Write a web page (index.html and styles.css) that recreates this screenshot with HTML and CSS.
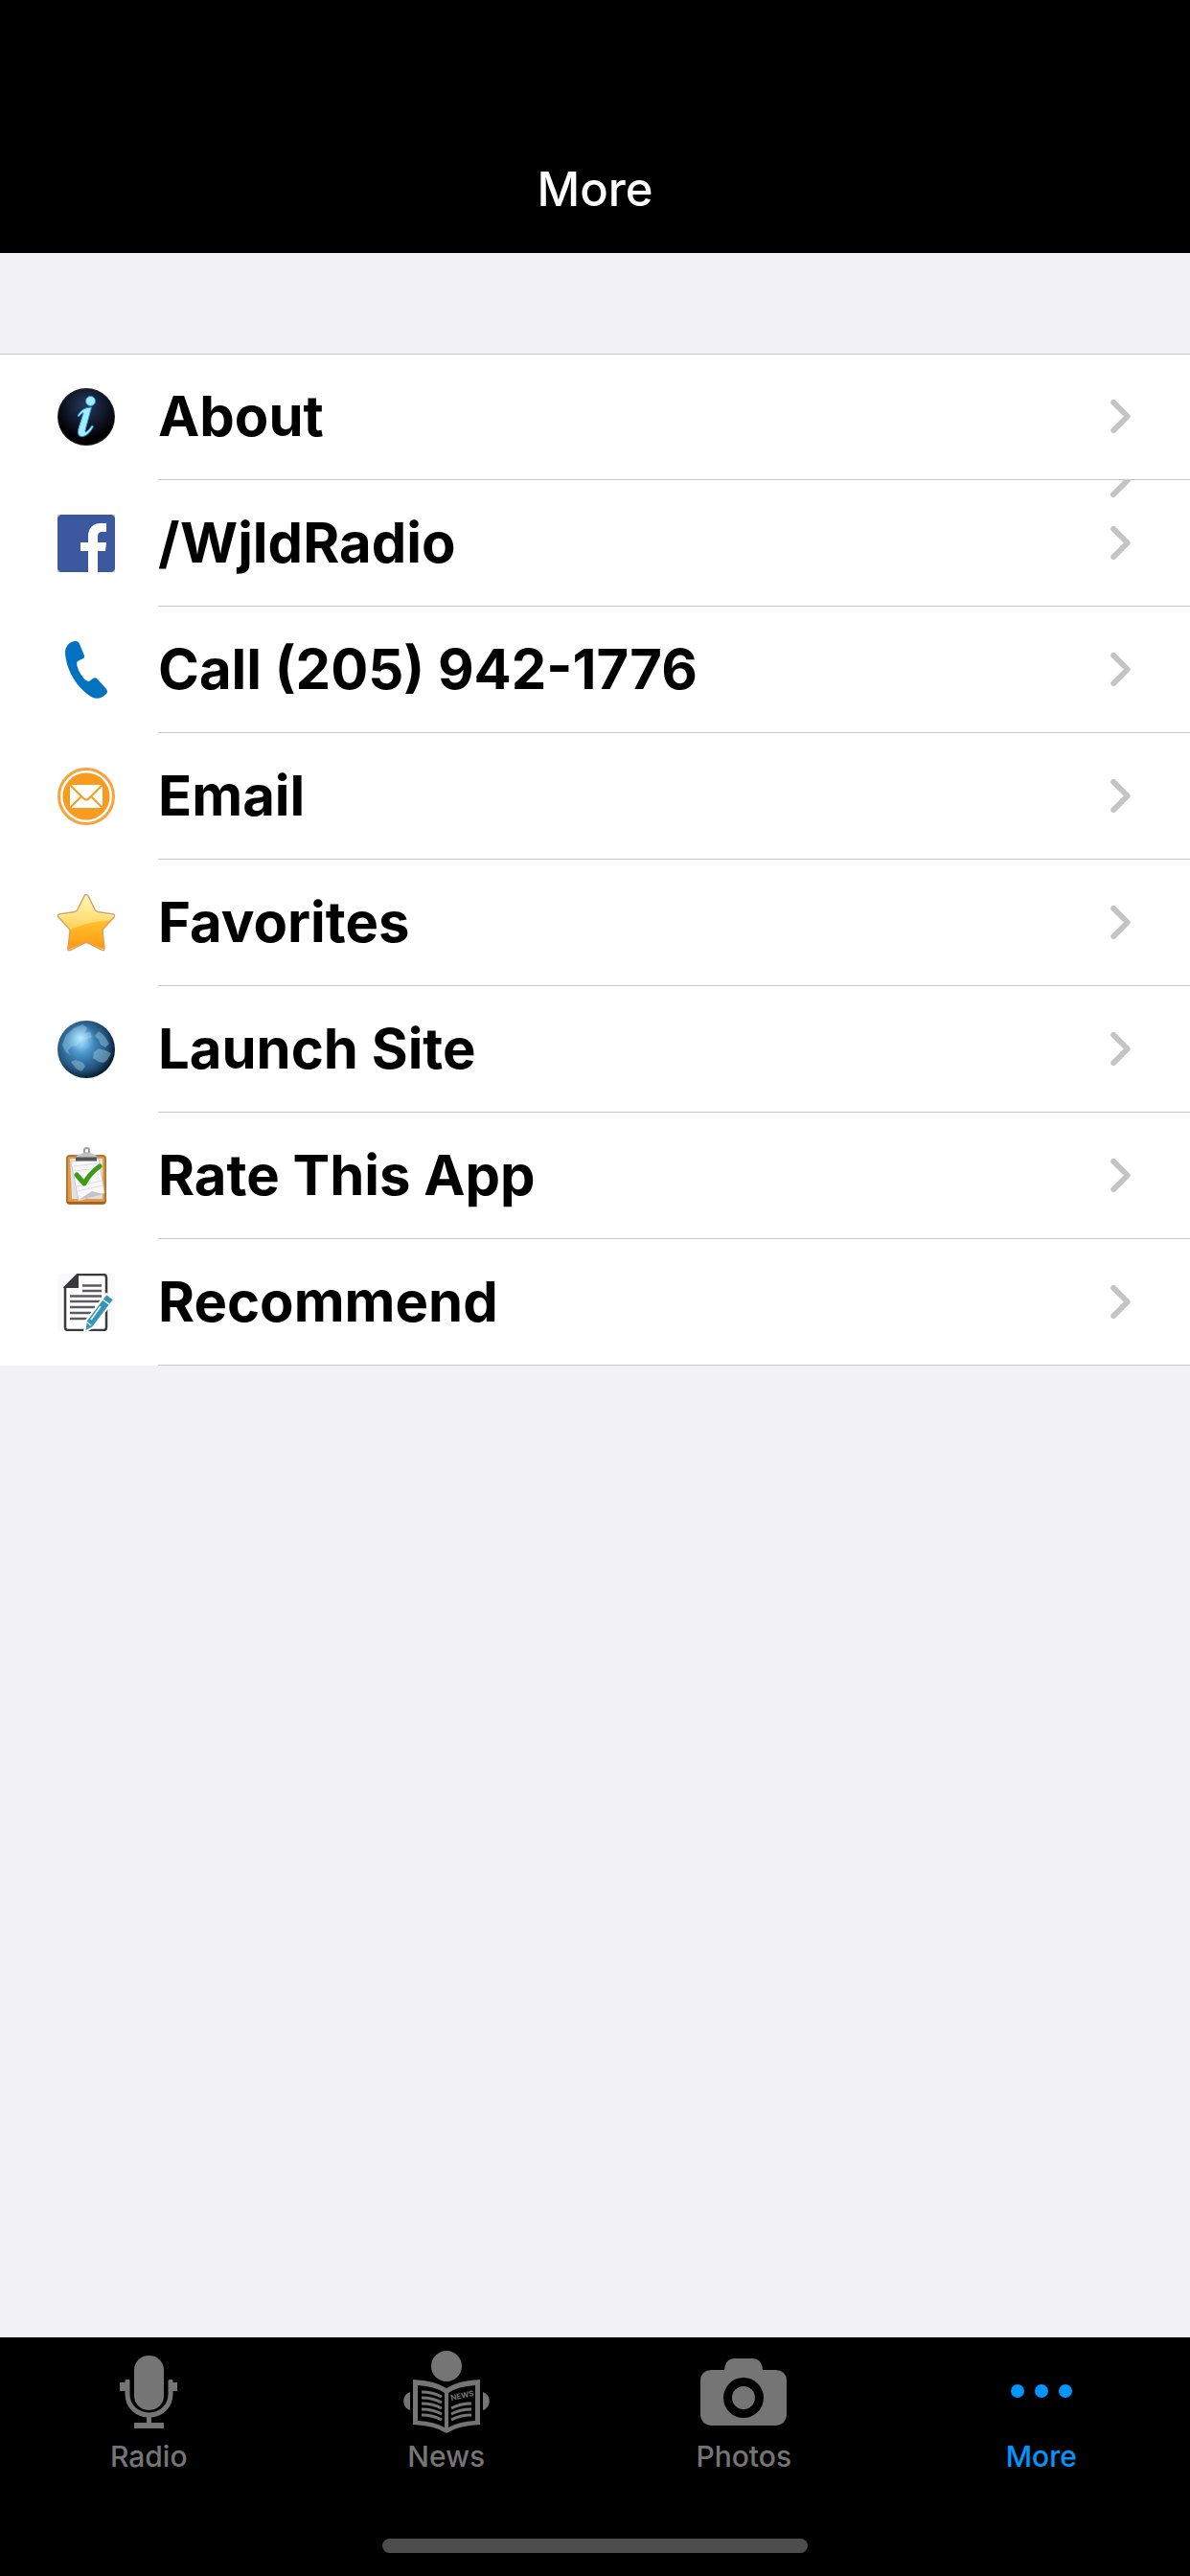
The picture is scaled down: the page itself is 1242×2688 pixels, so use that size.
FILE: index.html
```html
<!DOCTYPE html>
<html lang="en">
    <head>
        <meta charset="utf-8">
        <meta name="viewport" content="width=device-width">
        <link rel="stylesheet" href="styles.css">
        <title>More</title>
    </head>
    <body>
        <svg class="defs" aria-hidden="true">
            <symbol id="chevron" viewBox="0 0 21 36">
                <path d="M3 3 18 18 3 33" fill="none" stroke="#c4c4c6" stroke-width="6" stroke-linecap="round" stroke-linejoin="round"/>
            </symbol>
        </svg>

        <header class="navbar">
            <h1>More</h1>
        </header>

        <main>
            <ul class="menu">
                <li>
                    <a href="#about">
                        <svg class="icon" viewBox="0 0 60 60">
                            <defs>
                                <radialGradient id="infoBg" cx="0.5" cy="0.3" r="0.6">
                                    <stop offset="0" stop-color="#263a5e"/>
                                    <stop offset="0.5" stop-color="#131d32"/>
                                    <stop offset="1" stop-color="#000"/>
                                </radialGradient>
                            </defs>
                            <circle cx="30" cy="30" r="30" fill="#222"/>
                            <circle cx="30" cy="30" r="29" fill="url(#infoBg)"/>
                            <g fill="#a4ecff" stroke="#2f8fd0">
                                <circle cx="34.5" cy="13.5" r="5"/>
                                <path d="M21 29C24 23 29 20 35.5 20L29 44C28.5 47 31 46 36 39L37.5 40C34 47 29 51 25 50.5C21 50 21 46 22 42L27 26C26 25 24 28 22 30Z"/>
                            </g>
                        </svg>
                        <span class="label">About</span>
                        <svg class="chevron"><use href="#chevron"/></svg>
                    </a>
                </li>
                <li>
                    <a href="#facebook">
                        <svg class="icon" viewBox="0 0 60 60">
                            <rect width="60" height="60" fill="#3c599f"/>
                            <path d="M0 0H3L0 3ZM60 0H57L60 3ZM0 60H3L0 57ZM60 60H57L60 57Z" fill="#b9c4df"/>
                            <path d="M32 60V38H24V29H32V23C32 14 37 9 45 9H51V18H47C43 18 42 20 42 23V29H51L50 38H42V60Z" fill="#fff"/>
                        </svg>
                        <span class="label">/WjldRadio</span>
                        <svg class="chevron"><use href="#chevron"/></svg>
                    </a>
                    <svg class="chevron-half" viewBox="0 18 21 18"><path d="M3 33 18 18" fill="none" stroke="#c4c4c6" stroke-width="6" stroke-linecap="round"/></svg>
                </li>
                <li>
                    <a href="#call">
                        <svg class="icon" viewBox="0 0 60 60">
                            <path d="M8 12C8 5 13 0 19 0Q22 0 23 3L28 15Q28.5 17 27 18L21 21C19 23 21 29 24 34C27 39 30 42 33 42L37 39Q40 37 42 40L51 50Q53 53 51 55C47 59 42 61 37 59C21 50 9 31 8 12Z" fill="#0072bf"/>
                        </svg>
                        <span class="label">Call (205) 942-1776</span>
                        <svg class="chevron"><use href="#chevron"/></svg>
                    </a>
                </li>
                <li>
                    <a href="#email">
                        <svg class="icon" viewBox="0 0 60 60">
                            <circle cx="30" cy="30" r="28.5" fill="#fff" stroke="#f9a33a" stroke-width="3"/>
                            <circle cx="30" cy="30" r="24.5" fill="#f99b1f"/>
                            <rect x="13" y="18" width="34" height="24" fill="#fff"/>
                            <path d="M13 18 27 32Q30 35 33 32L47 18M13 42 25 30M47 42 35 30" fill="none" stroke="#f99b1f" stroke-width="2"/>
                        </svg>
                        <span class="label">Email</span>
                        <svg class="chevron"><use href="#chevron"/></svg>
                    </a>
                </li>
                <li>
                    <a href="#favorites">
                        <svg class="icon" viewBox="0 0 60 60">
                            <defs>
                                <linearGradient id="starTop" x1="0" y1="0" x2="0" y2="1">
                                    <stop offset="0" stop-color="#fffcc0"/>
                                    <stop offset="1" stop-color="#ffc840"/>
                                </linearGradient>
                                <linearGradient id="starLow" x1="0" y1="0" x2="0" y2="1">
                                    <stop offset="0" stop-color="#ffc42e"/>
                                    <stop offset="1" stop-color="#ff9312"/>
                                </linearGradient>
                                <clipPath id="starClip">
                                    <path d="M30 1 40 19 59 23 47 38 49 58 30 50 11 58 13 38 1 23 20 19Z"/>
                                </clipPath>
                            </defs>
                            <g clip-path="url(#starClip)">
                                <rect width="60" height="45" fill="url(#starTop)"/>
                                <path d="M0 46C15 36 25 29 60 27V60H0Z" fill="url(#starLow)"/>
                            </g>
                            <path d="M28 2Q30 -1 32 2L39 16Q40 18 42 18.5L58 21Q61 22 59 24L48 36Q47 37 47 39L49 56Q49 60 46 58L32 51Q30 50 28 51L14 58Q10 60 11 56L13 39Q13 37 12 36L1 24Q-1 22 2 21L18 18.5Q20 18 21 16Z" fill="none" stroke="#dfa050" stroke-width="1.5"/>
                        </svg>
                        <span class="label">Favorites</span>
                        <svg class="chevron"><use href="#chevron"/></svg>
                    </a>
                </li>
                <li>
                    <a href="#site">
                        <svg class="icon" viewBox="0 0 60 60">
                            <defs>
                                <radialGradient id="globeBg" cx="0.42" cy="0.42" r="0.6">
                                    <stop offset="0" stop-color="#6fbdf0"/>
                                    <stop offset="0.4" stop-color="#3d82b5"/>
                                    <stop offset="0.75" stop-color="#225179"/>
                                    <stop offset="1" stop-color="#071a2e"/>
                                </radialGradient>
                                <radialGradient id="globeShine" cx="0.4" cy="0.3" r="0.25">
                                    <stop offset="0" stop-color="#c4f0ff" stop-opacity="0.9"/>
                                    <stop offset="1" stop-color="#8fd6ff" stop-opacity="0"/>
                                </radialGradient>
                            </defs>
                            <circle cx="30" cy="30" r="30" fill="url(#globeBg)"/>
                            <g fill="#9fd2e6" opacity="0.45">
                                <path d="M5 25 9 15 17 8 26 4 31 7 29 13 34 12 36 17 29 20 24 22 20 26 15 27 11 31 13 36 8 32Z"/>
                                <path d="M14 43 19 41 27 44 29 48 25 53 19 50Z"/>
                                <path d="M38 33 43 29 50 31 56 34 52 41 48 44 43 43 37 39Z"/>
                                <path d="M39 16 43 11 49 16 54 24 50 28 45 25 43 20Z"/>
                            </g>
                            <circle cx="30" cy="30" r="29" fill="url(#globeShine)"/>
                        </svg>
                        <span class="label">Launch Site</span>
                        <svg class="chevron"><use href="#chevron"/></svg>
                    </a>
                </li>
                <li>
                    <a href="#rate">
                        <svg class="icon" viewBox="0 0 60 60">
                            <rect x="10" y="9" width="40" height="50" rx="3" fill="#e39a45" stroke="#b87528" stroke-width="2"/>
                            <path d="M10 58H50" stroke="#a8611c" stroke-width="2"/>
                            <path d="M13 12H47V54H15Z" fill="#e0e2e8"/>
                            <path d="M14 15 43 12 49 48 22 56Z" fill="#f8f8fb" stroke="#c9c9d2"/>
                            <path d="M17 20 42 17M18 25 43 22M20 41 46 35M21 46 47 40" stroke="#dcdce6"/>
                            <path d="M22 55 36 46 48 49Z" fill="#c3c3ca"/>
                            <path d="M19 14V10Q20 8 25 7L28 5H33L36 7Q41 8 41 10V14Z" fill="#c2c2c2"/>
                            <path d="M19 12.5H41" stroke="#555" stroke-width="4"/>
                            <path d="M28 6V3Q28 1 30.5 1T33 3V6" fill="none" stroke="#a0a0a0" stroke-width="2"/>
                            <path d="M20 29 28 38Q33 28 44 20" fill="none" stroke="#3f9b12" stroke-width="5" stroke-linecap="round" stroke-linejoin="round"/>
                        </svg>
                        <span class="label">Rate This App</span>
                        <svg class="chevron"><use href="#chevron"/></svg>
                    </a>
                </li>
                <li>
                    <a href="#recommend">
                        <svg class="icon" viewBox="0 0 60 60">
                            <rect width="60" height="60" fill="#fafafa"/>
                            <path d="M21 1H48Q51 1 51 4V56Q51 59 48 59H11Q8 59 8 56V14Z" fill="#fff" stroke="#3a3a3c" stroke-width="2.5"/>
                            <path d="M21 1V14H8Z" fill="#3a3a3c" stroke="#3a3a3c" stroke-width="2"/>
                            <path d="M26 12.5H46M26 18H46M13 23.5H46M13 29H44M13 35H39M13 41H35M13 47H31" stroke="#5b5b5d" stroke-width="2.5"/>
                            <path d="M51 21 59 27 37 56 28 61 30 49Z" fill="#3695b8" stroke="#fff" stroke-width="2"/>
                            <path d="M47 27 54 32M45 34 35 48M31 51 35 54" stroke="#fff" stroke-width="1.5"/>
                        </svg>
                        <span class="label">Recommend</span>
                        <svg class="chevron"><use href="#chevron"/></svg>
                    </a>
                </li>
            </ul>
        </main>

        <footer class="bottom">
            <nav class="tabs">
                <a href="#radio">
                    <svg class="tab-icon" viewBox="0 0 90 90">
                        <rect x="30" y="7" width="31" height="57" rx="15" fill="currentColor"/>
                        <path d="M23 33V47C23 60 33 69 45.5 69S68 60 68 47V33" fill="none" stroke="currentColor" stroke-width="5"/>
                        <path d="M15 35H21V32H25V44H15ZM75 35H70V32H66V44H75ZM43 70H48V77H61V83H30V77H43Z" fill="currentColor"/>
                    </svg>
                    <span>Radio</span>
                </a>
                <a href="#news">
                    <svg class="tab-icon" viewBox="0 0 90 90" fill="currentColor">
                        <circle cx="45" cy="18" r="16"/>
                        <path d="M7 45C-2 48-2 61 7 64ZM83 45C92 48 92 61 83 64Z"/>
                        <path fill-rule="evenodd" d="M10 32Q33 33 45 41Q57 33 80 32V79Q57 80 45 88Q33 80 10 79ZM15 38V75Q33 76 43 82V46Q33 39 15 38ZM75 38Q57 39 47 46V82Q57 76 75 75Z"/>
                        <path d="M19 45Q31 45 40 50M19 51Q31 51 40 56M19 57Q31 57 40 62M19 63Q31 63 40 68M19 69Q31 69 40 74M71 57Q59 57 50 62M71 63Q59 63 50 68M71 69Q59 69 50 74" fill="none" stroke="currentColor" stroke-width="3"/>
                        <text class="paper-title" x="50" y="54" transform="rotate(-12 50 54)">NEWS</text>
                    </svg>
                    <span>News</span>
                </a>
                <a href="#photos">
                    <svg class="tab-icon" viewBox="0 0 90 90" fill="currentColor">
                        <path fill-rule="evenodd" d="M11 22H25Q26 10 36 10H54Q64 10 65 22H79Q90 23 90 33V69Q89 79 79 80H11Q1 79 0 69V33Q0 23 11 22ZM45 30A21 21 0 1 0 45 72A21 21 0 1 0 45 30Z"/>
                        <circle cx="45" cy="51" r="12"/>
                    </svg>
                    <span>Photos</span>
                </a>
                <a href="#more" class="active">
                    <svg class="tab-icon" viewBox="0 0 90 90" fill="currentColor">
                        <circle cx="20" cy="44" r="7"/>
                        <circle cx="45" cy="44" r="7"/>
                        <circle cx="70" cy="44" r="7"/>
                    </svg>
                    <span>More</span>
                </a>
            </nav>
            <div class="home-bar"></div>
        </footer>
    </body>
</html>
```
FILE: styles.css
```css
* {
    box-sizing: border-box;
}
body {
    margin: 0;
    min-height: 100vh;
    display: flex;
    flex-direction: column;
    background-color: #f2f1f6;
    font-family: Inter, sans-serif;
}
a {
    color: inherit;
    text-decoration: none;
}
.defs {
    display: none;
}
.navbar {
    height: 264px;
    padding-top: 132px;
    background-color: #000;
    color: #fff;
}
h1 {
    margin: 0;
    font-size: 49px;
    line-height: 132px;
    font-weight: 500;
    text-align: center;
}
main {
    flex: 1;
    padding-top: 105px;
}
.menu {
    margin: 0;
    padding: 0;
    list-style: none;
    background-color: #fff;
    box-shadow: inset 0 1px #c6c6c8;
}
.menu li {
    position: relative;
}
.menu a {
    display: flex;
    align-items: center;
    height: 132px;
    padding-left: 60px;
}
.icon {
    width: 60px;
    height: 60px;
    margin-right: 45px;
}
.label {
    flex: 1;
    line-height: 131px;
    border-bottom: 1px solid #c6c6c8;
    font-size: 58px;
    font-weight: 700;
}
.menu a .chevron {
    width: 83px;
    height: 132px;
    padding: 48px 62px 48px 0;
    border-bottom: 1px solid #c6c6c8;
}
/* leftover half arrow at the top of the row */
.chevron-half {
    position: absolute;
    top: 0;
    right: 62px;
    width: 21px;
    height: 18px;
}
.bottom {
    height: 249px;
    padding: 12px 0 24px;
    display: flex;
    flex-direction: column;
    align-items: center;
    justify-content: space-between;
    background-color: #000;
}
.tabs {
    width: 100%;
    display: grid;
    grid-template-columns: repeat(4, 1fr);
    color: #757575;
}
.tabs a {
    display: flex;
    flex-direction: column;
    align-items: center;
    gap: 4px;
    font-size: 30px;
    line-height: 36px;
    font-weight: 500;
}
.tabs .active {
    color: #0096ff;
}
.tab-icon {
    width: 90px;
    height: 90px;
}
.paper-title {
    font-size: 8px;
    font-weight: 700;
}
.home-bar {
    width: 444px;
    height: 15px;
    border-radius: 8px;
    background-color: #4d4d4d;
}
```
